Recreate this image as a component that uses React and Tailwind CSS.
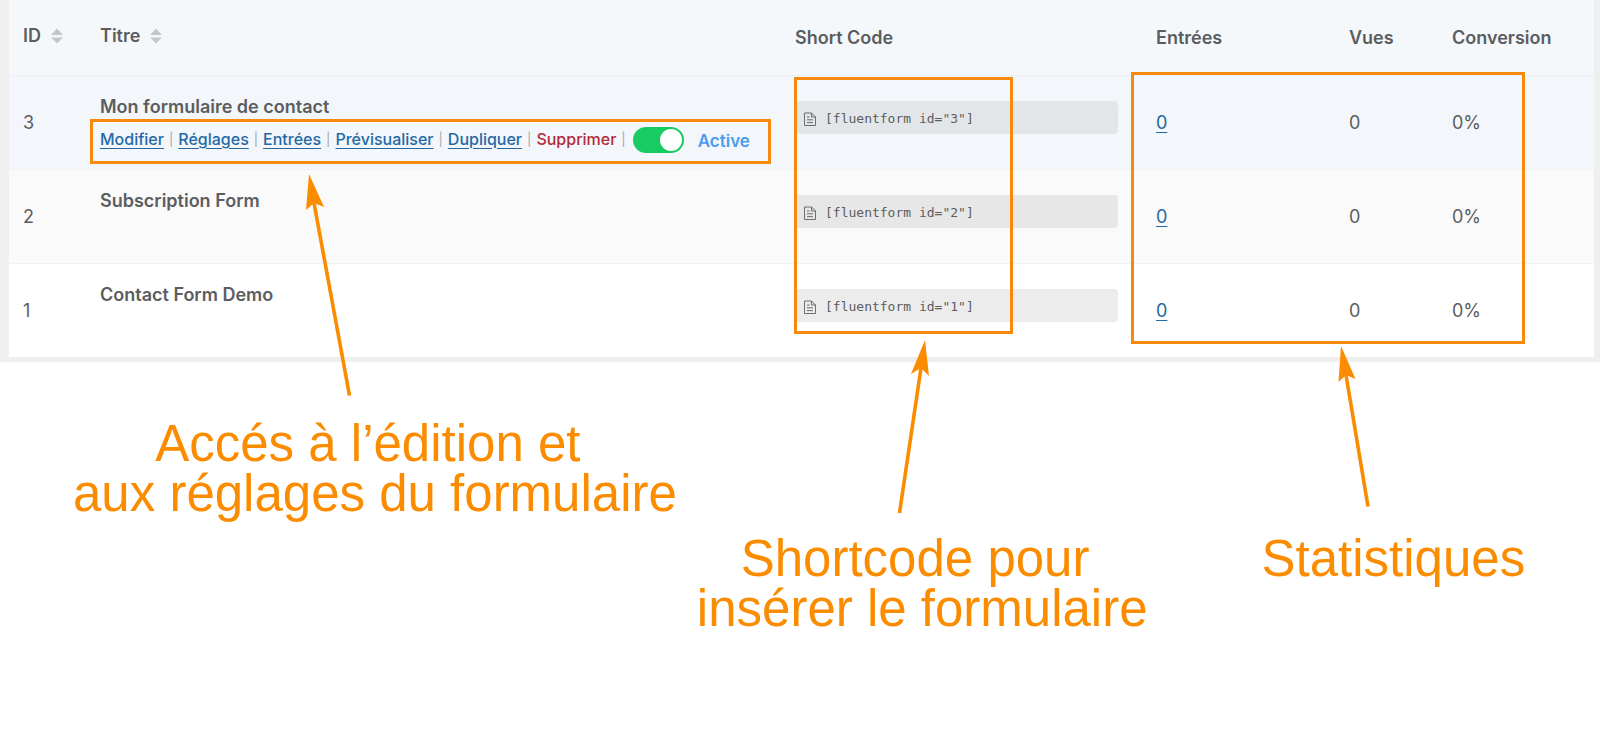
import React, { useState } from "react";

const forms = [
  { id: 3, title: "Mon formulaire de contact", bg: "bg-[#f3f6fa]", pill: "bg-[#e3e6e9]", actions: true },
  { id: 2, title: "Subscription Form", bg: "bg-[#fafafa]", pill: "bg-[#e7e7e7]" },
  { id: 1, title: "Contact Form Demo", bg: "bg-white", pill: "bg-[#ececec]" },
];

const links = ["Modifier", "Réglages", "Entrées", "Prévisualiser", "Dupliquer"];

function SortButton({ label }) {
  return (
    <button type="button" className="flex items-center gap-[9px] pb-[2px] font-semibold">
      {label}
      <svg width="14" height="16" viewBox="0 0 14 16" fill="#c3c7cd" aria-hidden="true">
        <path d="M7 0.5 13 7H1z" />
        <path d="M7 15.5 13 9.5H1z" />
      </svg>
    </button>
  );
}

function DocumentIcon() {
  return (
    <svg width="12" height="14" viewBox="0 0 12 14" fill="none" stroke="#6b6d70" strokeWidth="1" aria-hidden="true">
      <path d="M0.5 1h7l4 4v8.5h-11z" />
      <path d="M7.5 1v4h4M3 5h2.5M3 7.8h6M3 10.6h6" />
    </svg>
  );
}

function StatusSwitch() {
  const [on, setOn] = useState(true);
  return (
    <label className="flex items-center gap-[14px] pl-[2px] pt-[2px]">
      <input
        type="checkbox"
        role="switch"
        checked={on}
        onChange={() => setOn(!on)}
        className="peer sr-only"
      />
      <span className="flex h-[26px] w-[51px] items-center rounded-full bg-[#b4b9be] px-[2px] peer-checked:justify-end peer-checked:bg-[#18cb63]">
        <span className="size-[22px] rounded-full bg-white" />
      </span>
      <span className="pt-[2px] text-[17px] font-semibold text-[#4a9cf0]">{on ? "Active" : "Inactive"}</span>
    </label>
  );
}

function RowActions() {
  return (
    <div className="mt-[6px] flex items-center gap-[5px] whitespace-nowrap text-[16px] font-medium">
      {links.map((name) => (
        <React.Fragment key={name}>
          <a href="#" className="text-[#2469a6] underline underline-offset-[3px]">{name}</a>
          <Separator />
        </React.Fragment>
      ))}
      <button type="button" className="text-[#b02a37]">Supprimer</button>
      <Separator />
      <StatusSwitch />
    </div>
  );
}

function Separator() {
  return <span className="text-[13px] font-normal text-[#a4a7ac]">|</span>;
}

function Arrow({ tip, left, notch, right, tail }) {
  return (
    <g>
      <line x1={notch[0]} y1={notch[1]} x2={tail[0]} y2={tail[1]} stroke="#fb8c00" strokeWidth="3.6" />
      <polygon points={[tip, left, notch, right].join(" ")} fill="#fb8c00" />
    </g>
  );
}

function Annotations() {
  return (
    <div className="pointer-events-none absolute inset-0">
      <div className="absolute left-[90px] top-[119px] h-[45px] w-[681px] border-3 border-[#f58a0c]" />
      <div className="absolute left-[794px] top-[77px] h-[257px] w-[219px] border-3 border-[#f58a0c]" />
      <div className="absolute left-[1131px] top-[72px] h-[272px] w-[394px] border-3 border-[#f58a0c]" />
      <svg className="absolute left-0 top-0" width="1600" height="520" aria-hidden="true">
        <Arrow tip={[309, 174]} left={[306, 210]} notch={[314, 203]} right={[324, 207]} tail={[349.5, 395.5]} />
        <Arrow tip={[925, 340]} left={[911, 374]} notch={[921, 368]} right={[929, 376]} tail={[899.5, 513]} />
        <Arrow tip={[1341, 346]} left={[1338.5, 382]} notch={[1346, 375]} right={[1355.5, 379]} tail={[1368, 506.5]} />
      </svg>
    </div>
  );
}

export default function App() {
  return (
    <main className="relative min-h-screen min-w-[1550px] bg-white">
      <section className="bg-[#efefef] pb-[5px] pl-[9px] pr-[6px] font-['Inter',sans-serif] text-[18px] leading-6 text-[#5b5d60]">
        <table className="w-full table-fixed border-collapse text-left">
          <colgroup>
            <col className="w-[77px]" />
            <col className="w-[695px]" />
            <col className="w-[361px]" />
            <col className="w-[193px]" />
            <col className="w-[103px]" />
            <col />
          </colgroup>
          <thead>
            <tr className="h-[75px] border-b border-[#ebeef5] bg-[#f5f8fb]">
              <th className="pl-[14px]"><SortButton label="ID" /></th>
              <th className="pl-[14px]"><SortButton label="Titre" /></th>
              <th className="pl-[14px] pt-[2px] font-semibold">Short Code</th>
              <th className="pl-[14px] pt-[2px] font-semibold">Entrées</th>
              <th className="pl-[14px] pt-[2px] font-semibold">Vues</th>
              <th className="pl-[14px] pt-[2px] font-semibold">Conversion</th>
            </tr>
          </thead>
          <tbody>
            {forms.map((form) => (
              <tr key={form.id} className={"h-[94px] border-b border-[#f0f2f6] last:border-0 " + form.bg}>
                <td className="pl-[14px] pt-[2px]">{form.id}</td>
                <td className="pl-[14px] pt-[19px] align-top">
                  <div className="font-semibold">{form.title}</div>
                  {form.actions && <RowActions />}
                </td>
                <td className="pl-[14px] pr-6 pt-[25px] align-top">
                  <div className={"flex h-[33px] items-center gap-[9px] rounded pl-[9px] pt-[3px] " + form.pill}>
                    <DocumentIcon />
                    <code className="font-['DejaVu_Sans_Mono',monospace] text-[13px]">{`[fluentform id="${form.id}"]`}</code>
                  </div>
                </td>
                <td className="pl-[14px] pt-[2px]">
                  <a href="#" className="text-[#2469a6] underline underline-offset-[3px]">0</a>
                </td>
                <td className="pl-[14px] pt-[2px]">0</td>
                <td className="pl-[14px] pt-[2px]">0%</td>
              </tr>
            ))}
          </tbody>
        </table>
      </section>

      <section className="flex items-start whitespace-pre pl-[73px] pt-[57px] text-center font-['Liberation_Sans',Arial,sans-serif] text-[51px] leading-[50px] text-[#fb8c00]">
        <p>{"Accés à l’édition et \naux réglages du formulaire"}</p>
        <p className="ml-5 mt-[115px]">{"Shortcode pour \ninsérer le formulaire"}</p>
        <p className="ml-[114px] mt-[115px]">Statistiques</p>
      </section>

      <Annotations />
    </main>
  );
}
